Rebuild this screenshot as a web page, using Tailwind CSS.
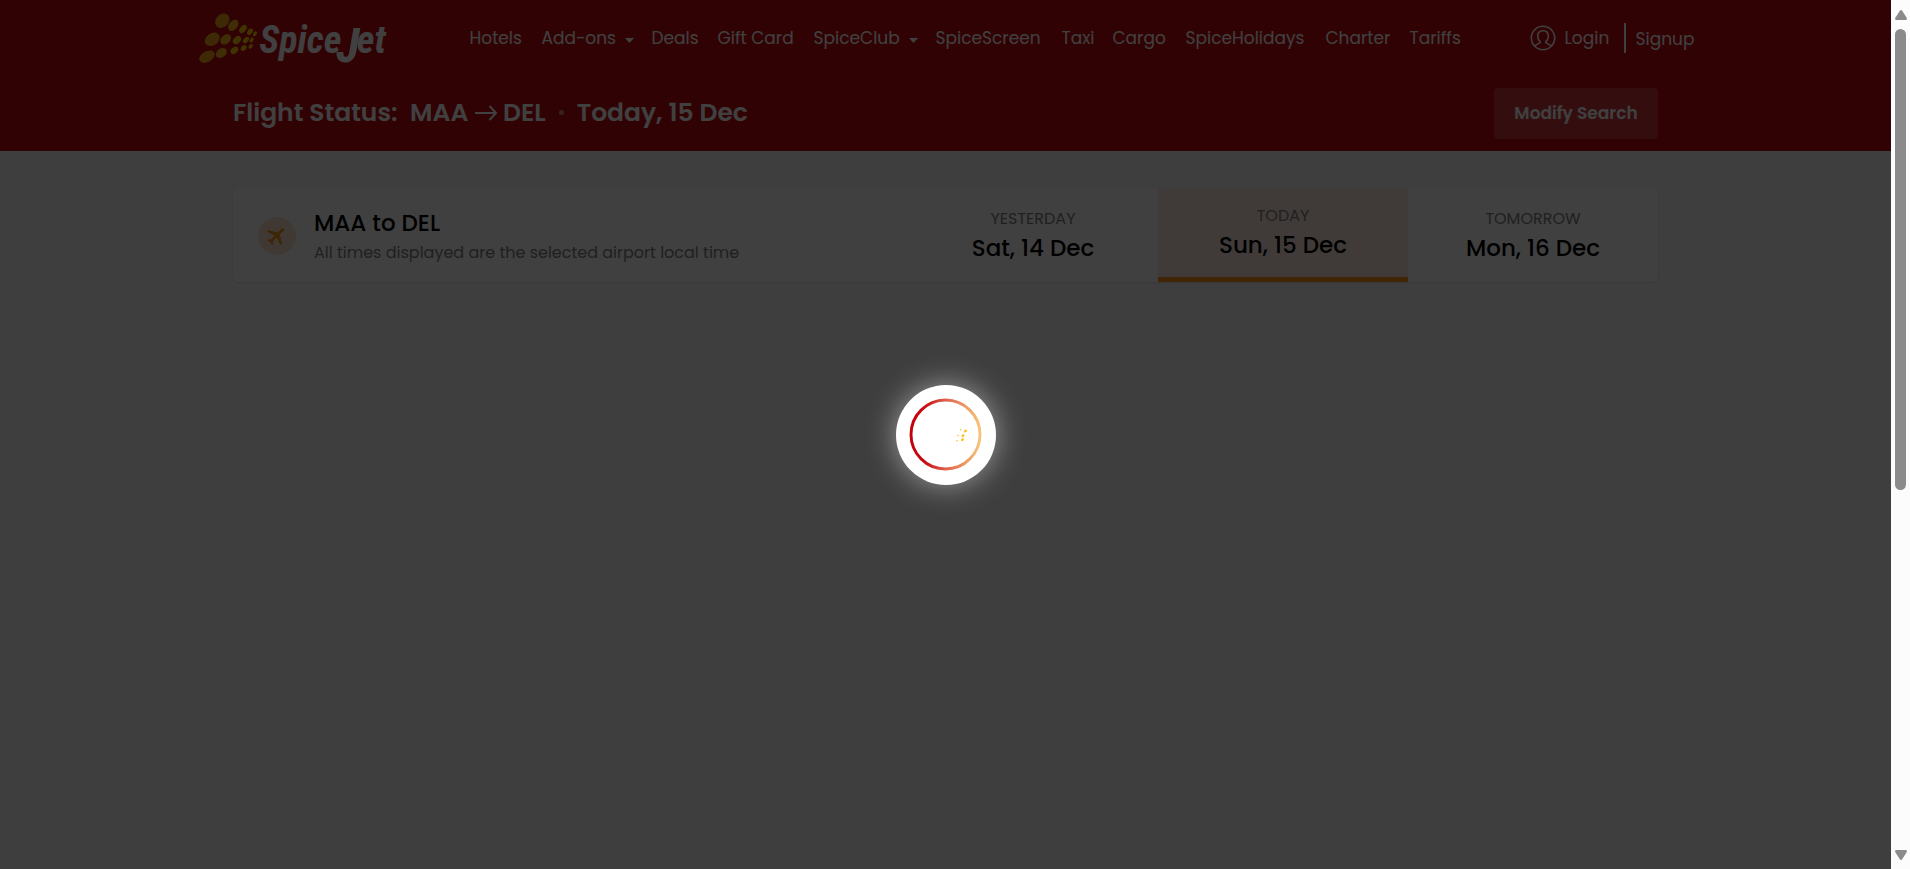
<!DOCTYPE html>
<html lang="en">
<head>
<meta charset="utf-8">
<title>SpiceJet - Flight Status</title>
<script src="https://cdn.jsdelivr.net/npm/@tailwindcss/browser@4"></script>
</head>
<body class="flex h-screen overflow-hidden bg-[#f8f8f8] font-['Poppins','Inter',sans-serif]">
<div class="relative min-w-0 flex-1">
  <header class="h-[151px] bg-[#c40a10] text-white">
    <div class="mx-auto flex h-[76px] max-w-[1500px] items-center">
      <a href="#" aria-label="SpiceJet" class="w-[188px] shrink-0">
        <svg viewBox="0 0 564 192" class="h-16 w-[188px] overflow-visible">
          <g fill="#f8a41c">
            <ellipse cx="79" cy="44" rx="24" ry="19" transform="rotate(-45 79 44)"/>
            <ellipse cx="49" cy="100" rx="24" ry="18" transform="rotate(-35 49 100)"/>
            <ellipse cx="33" cy="152" rx="25" ry="16" transform="rotate(-30 33 152)"/>
          </g>
          <g fill="#f8b414">
            <ellipse cx="112" cy="58" rx="19" ry="13" transform="rotate(-50 112 58)"/>
            <ellipse cx="89" cy="100" rx="18" ry="13" transform="rotate(-40 89 100)"/>
            <ellipse cx="76" cy="141" rx="18" ry="13" transform="rotate(-35 76 141)"/>
          </g>
          <g fill="#ffcc08">
            <ellipse cx="141" cy="69" rx="14" ry="9" transform="rotate(-52 141 69)"/>
            <ellipse cx="162" cy="77" rx="11" ry="7" transform="rotate(-55 162 77)"/>
            <ellipse cx="177" cy="83" rx="8" ry="5" transform="rotate(-58 177 83)"/>
            <ellipse cx="123" cy="102" rx="14" ry="10" transform="rotate(-45 123 102)"/>
            <ellipse cx="150" cy="102" rx="11" ry="7" transform="rotate(-50 150 102)"/>
            <ellipse cx="167" cy="102" rx="8" ry="5" transform="rotate(-55 167 102)"/>
            <ellipse cx="115" cy="133" rx="13" ry="9" transform="rotate(-42 115 133)"/>
            <ellipse cx="143" cy="126" rx="10" ry="7" transform="rotate(-45 143 126)"/>
            <ellipse cx="164" cy="121" rx="8" ry="5" transform="rotate(-50 164 121)"/>
          </g>
          <text x="190" y="140" fill="#fff" font-family="'Roboto Condensed', 'Barlow Condensed', 'Fira Sans Condensed', 'Liberation Sans', sans-serif" font-weight="700" font-style="italic" font-size="114">Spice<tspan dx="-15" dy="27" font-size="146">J</tspan><tspan dx="-8" dy="-27">et</tspan></text>
        </svg>
      </a>
      <nav class="ml-[86px] grid grid-cols-[72px_110px_66px_96px_122px_126px_51px_73px_140px_84px_60px] whitespace-nowrap text-[17px] leading-6">
        <a href="#">Hotels</a>
        <a href="#" class="flex items-center gap-[9px]">Add-ons <svg viewBox="0 0 9 5" class="mt-1 h-[5px] w-[9px]" fill="currentColor"><path d="M0 0h9L4.500 5z"/></svg></a>
        <a href="#">Deals</a>
        <a href="#">Gift Card</a>
        <a href="#" class="flex items-center gap-[9px]">SpiceClub <svg viewBox="0 0 9 5" class="mt-1 h-[5px] w-[9px]" fill="currentColor"><path d="M0 0h9L4.500 5z"/></svg></a>
        <a href="#">SpiceScreen</a>
        <a href="#">Taxi</a>
        <a href="#">Cargo</a>
        <a href="#">SpiceHolidays</a>
        <a href="#">Charter</a>
        <a href="#">Tariffs</a>
      </nav>
      <div class="ml-auto flex items-center text-[17px] leading-6">
        <a href="#" class="flex w-[94px] items-center gap-[9px]">
          <svg viewBox="0 0 26 26" class="size-[26px] shrink-0" fill="none" stroke="currentColor" stroke-width="1.6"><circle cx="13" cy="13" r="11.700"/><path d="M13 5.700c-3.400 0-5.300 2.400-5.300 5.600 0 2 .9 4 2.300 5.100.5.500.4 1.200-.2 1.500L4.800 20.600M13 5.700c3.400 0 5.300 2.400 5.300 5.600 0 2-.9 4-2.300 5.100-.5.500-.4 1.200.2 1.500l5 2.700"/></svg>
          Login</a>
        <span class="h-[30px] w-0.5 bg-white"></span>
        <a href="#" class="ml-2.5 w-[60px] pt-0.5">Signup</a>
      </div>
    </div>
    <div class="mx-auto flex max-w-[1425px] items-center justify-between pt-3">
      <h1 class="flex items-center whitespace-nowrap pb-0.5 text-[25px] font-semibold leading-9">
        <span class="w-[177px]">Flight Status:</span>
        <span class="w-[65px]">MAA</span>
        <svg viewBox="0 0 22 16" class="mr-1.5 h-4 w-[22px]" fill="none" stroke="currentColor" stroke-width="2"><path d="M0 8h20.500M14.500 1l6.500 7-6.500 7"/></svg>
        <span>DEL</span>
        <span class="mx-[13px] size-[5px] rounded-full bg-white/50"></span>
        <span>Today, 15 Dec</span>
      </h1>
      <button class="h-[51px] w-[164px] rounded bg-white/20 text-[17px] font-semibold">Modify Search</button>
    </div>
  </header>
  <main class="mx-auto mt-[38px] flex h-[93px] max-w-[1425px] overflow-hidden rounded-md bg-white shadow-sm">
    <div class="flex flex-1 items-center gap-[18px] pl-[25px]">
      <span class="flex size-[38px] items-center justify-center rounded-full bg-[#ffe2cc]">
        <svg viewBox="0 0 24 24" class="size-6 rotate-45" fill="#f79420"><path d="M21 16v-2l-8-5V3.500C13 2.670 12.330 2 11.500 2S10 2.670 10 3.500V9l-8 5v2l8-2.500V19l-2 1.500V22l3.500-1 3.500 1v-1.500L13 19v-5.500z"/></svg>
      </span>
      <div class="pt-0.5">
        <h2 class="text-[23px] font-medium leading-8 text-black">MAA to DEL</h2>
        <p class="text-base leading-7 text-[#808080]">All times displayed are the selected airport local time</p>
      </div>
    </div>
    <button class="w-[250px]"><span class="block text-base leading-6 text-[#808080]">YESTERDAY</span><span class="block text-[23px] font-medium leading-[34px] text-black">Sat, 14 Dec</span></button>
    <button class="w-[250px] border-b-[5px] border-[#ff9419] bg-[#ffece2]"><span class="block text-base leading-6 text-[#808080]">TODAY</span><span class="block text-[23px] font-medium leading-[34px] text-black">Sun, 15 Dec</span></button>
    <button class="w-[250px]"><span class="block text-base leading-6 text-[#808080]">TOMORROW</span><span class="block text-[23px] font-medium leading-[34px] text-black">Mon, 16 Dec</span></button>
  </main>
  <div class="absolute inset-0 flex items-center justify-center bg-black/75" role="status" aria-label="Loading">
    <div class="size-[100px] rounded-full bg-white shadow-[0_0_30px_rgba(255,255,255,0.5)]">
      <svg viewBox="0 0 100 100" class="size-[100px]">
        <defs><linearGradient id="ring" x1="0" x2="1" y1="0" y2="0"><stop offset="0" stop-color="#c4000c"/><stop offset=".2" stop-color="#c80c14"/><stop offset=".5" stop-color="#e0604c"/><stop offset="1" stop-color="#f6c478"/></linearGradient></defs>
        <circle cx="49.500" cy="49.500" r="34.500" fill="none" stroke="url(#ring)" stroke-width="2.900"/>
        <g fill="#fcbf14">
          <ellipse cx="69.500" cy="46" rx="1.800" ry="1.200" transform="rotate(-45 69.500 46)"/>
          <ellipse cx="67" cy="50.700" rx="1.700" ry="1.200" transform="rotate(-45 67 50.700)"/>
          <ellipse cx="66.500" cy="54.700" rx="1.700" ry="1.200" transform="rotate(-45 66.500 54.700)"/>
          <circle cx="64.500" cy="44.700" r=".8"/><circle cx="62" cy="50.500" r=".8"/><circle cx="61" cy="55.700" r=".8"/>
        </g>
      </svg>
    </div>
  </div>
</div>
<div class="flex w-[19px] shrink-0 flex-col items-center bg-[#fcfcfc] pt-2.5 pb-[9px]" aria-hidden="true">
  <svg viewBox="0 0 12 10" class="h-2.5 w-3 shrink-0" fill="#8b8b8b"><path d="M5 .6q1-1 2 0L11.800 8q.4 2-1 2H1.200q-1.400 0-1-2z"/></svg>
  <div class="mt-[9px] h-[461px] w-[11px] rounded-full bg-[#8b8b8b]"></div>
  <svg viewBox="0 0 12 10" class="mt-auto h-2.5 w-3 shrink-0 rotate-180" fill="#8b8b8b"><path d="M5 .6q1-1 2 0L11.800 8q.4 2-1 2H1.200q-1.400 0-1-2z"/></svg>
</div>
</body>
</html>
